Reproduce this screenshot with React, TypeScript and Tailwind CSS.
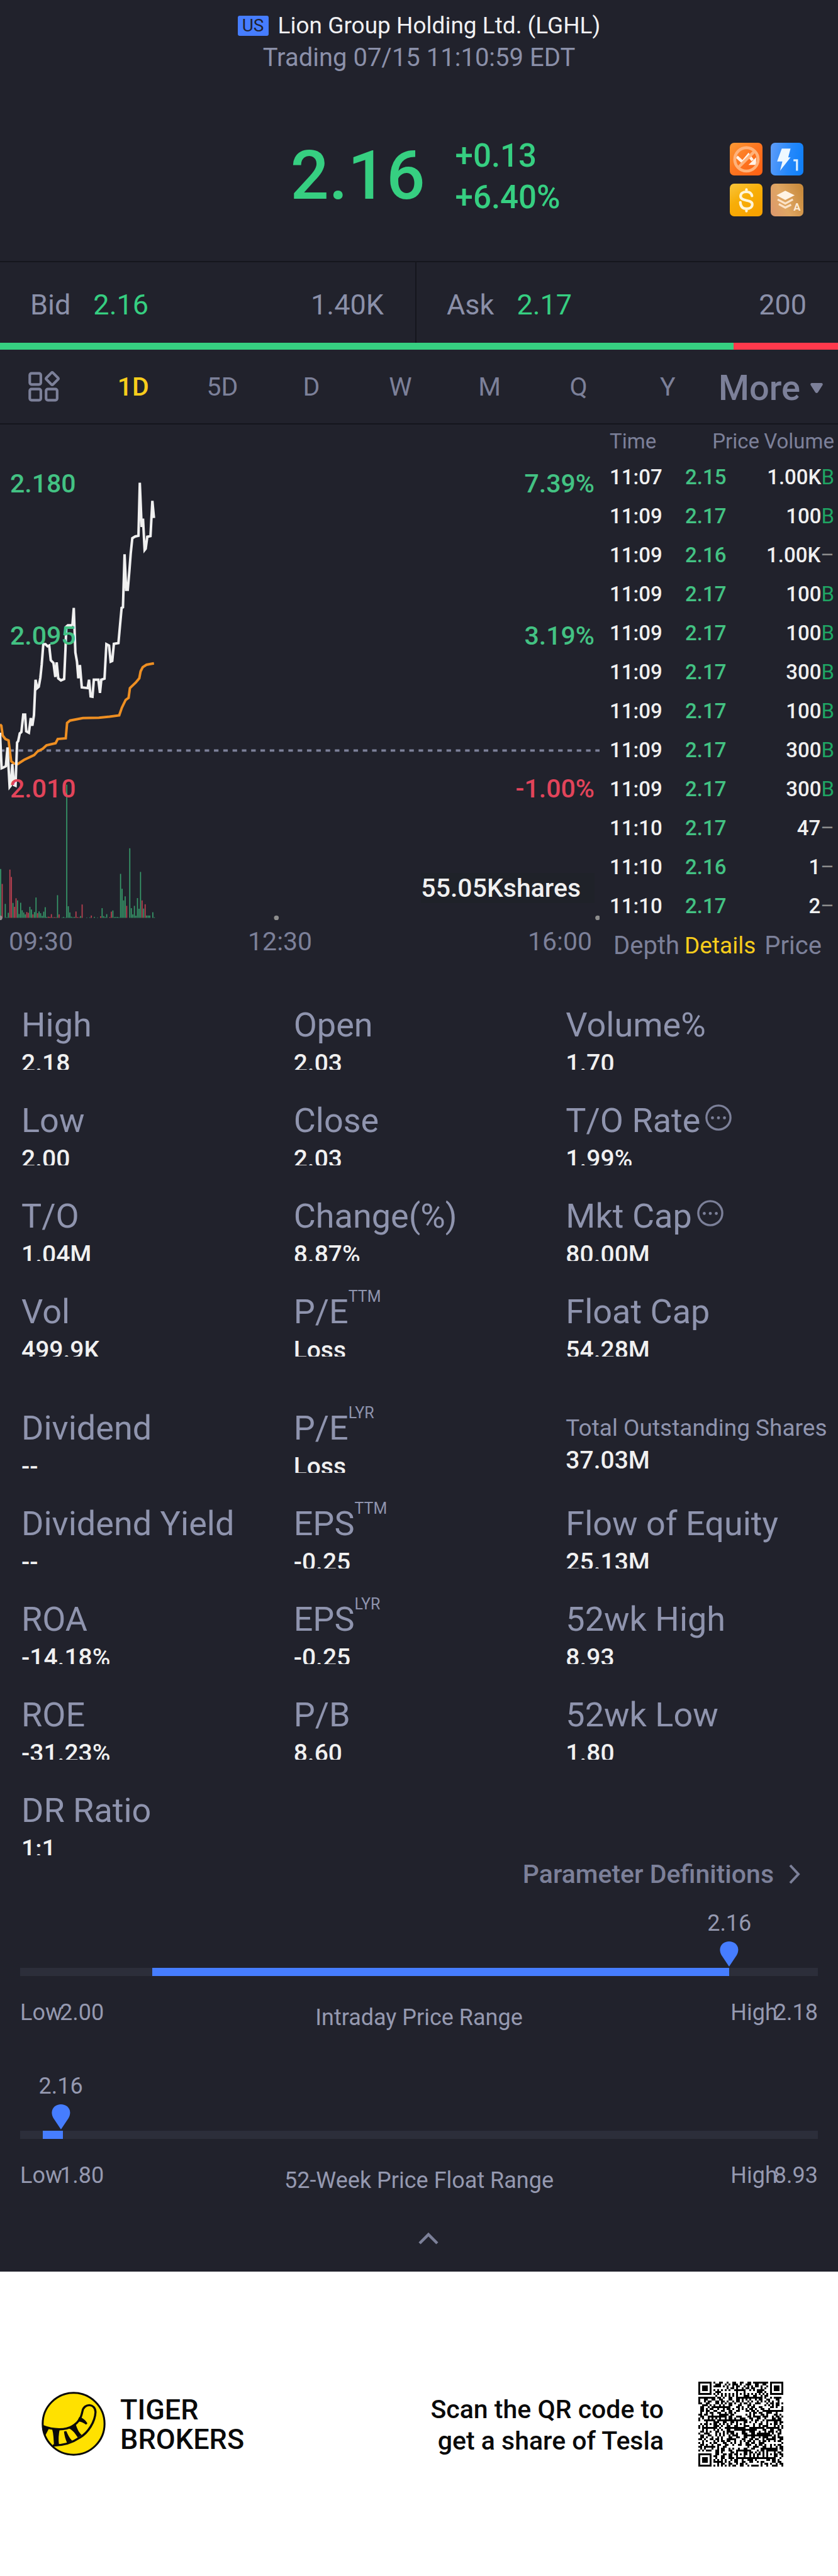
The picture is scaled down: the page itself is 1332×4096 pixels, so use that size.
import { ReactNode } from "react";

type Side = "B" | "–";

const intervals = ["1D", "5D", "D", "W", "M", "Q", "Y"];

const trades: { time: string; price: string; volume: string; side: Side }[] = [
  { time: "11:07", price: "2.15", volume: "1.00K", side: "B" },
  { time: "11:09", price: "2.17", volume: "100", side: "B" },
  { time: "11:09", price: "2.16", volume: "1.00K", side: "–" },
  { time: "11:09", price: "2.17", volume: "100", side: "B" },
  { time: "11:09", price: "2.17", volume: "100", side: "B" },
  { time: "11:09", price: "2.17", volume: "300", side: "B" },
  { time: "11:09", price: "2.17", volume: "100", side: "B" },
  { time: "11:09", price: "2.17", volume: "300", side: "B" },
  { time: "11:09", price: "2.17", volume: "300", side: "B" },
  { time: "11:10", price: "2.17", volume: "47", side: "–" },
  { time: "11:10", price: "2.16", volume: "1", side: "–" },
  { time: "11:10", price: "2.17", volume: "2", side: "–" },
];

type Stat = { label: string; value: string; sup?: string; info?: boolean; small?: boolean };

const quoteStats: Stat[] = [
  { label: "High", value: "2.18" },
  { label: "Open", value: "2.03" },
  { label: "Volume%", value: "1.70" },
  { label: "Low", value: "2.00" },
  { label: "Close", value: "2.03" },
  { label: "T/O Rate", value: "1.99%", info: true },
  { label: "T/O", value: "1.04M" },
  { label: "Change(%)", value: "8.87%" },
  { label: "Mkt Cap", value: "80.00M", info: true },
  { label: "Vol", value: "499.9K" },
  { label: "P/E", value: "Loss", sup: "TTM" },
  { label: "Float Cap", value: "54.28M" },
];

const companyStats: Stat[] = [
  { label: "Dividend", value: "--" },
  { label: "P/E", value: "Loss", sup: "LYR" },
  { label: "Total Outstanding Shares", value: "37.03M", small: true },
  { label: "Dividend Yield", value: "--" },
  { label: "EPS", value: "-0.25", sup: "TTM" },
  { label: "Flow of Equity", value: "25.13M" },
  { label: "ROA", value: "-14.18%" },
  { label: "EPS", value: "-0.25", sup: "LYR" },
  { label: "52wk High", value: "8.93" },
  { label: "ROE", value: "-31.23%" },
  { label: "P/B", value: "8.60" },
  { label: "52wk Low", value: "1.80" },
  { label: "DR Ratio", value: "1:1" },
];

const priceLine =
  "0,900 6,1002 12,1000 22,996 28,942 36,1056 40,1052 46,990 52,1050 58,1052 64,928 68,924 74,902 80,898 87,848 94,848 98,896 108,900 115,858 121,880 127,850 133,748 139,772 145,768 151,742 156,705 162,646 170,646 178,652 184,650 190,692 200,700 207,740 212,698 218,744 228,750 240,746 245,660 248,596 254,592 266,592 271,590 276,542 282,670 288,696 293,744 299,706 306,770 328,772 333,748 339,796 346,797 351,748 368,748 374,786 379,748 391,745 398,646 408,650 414,696 420,694 426,645 443,643 449,592 455,542 460,540 466,388 472,490 478,490 484,436 489,386 495,342 506,337 518,335 523,183 530,310 535,286 541,376 545,372 551,338 563,336 570,235 576,284";

const averageLine =
  "0,876 5,880 10,908 20,918 32,922 38,960 42,982 52,988 66,990 90,978 128,964 140,954 160,946 174,936 208,930 216,918 246,916 251,872 262,865 310,858 370,857 410,854 446,850 456,828 470,806 481,800 486,772 508,756 521,744 526,724 534,712 548,705 576,701";

// one entry per minute, a negative number is a falling minute
const volumes = [
  252, -175, 0, 72, 3, 26, -249, -211, 77, -57, -101, 90, 20, 78, 39, 28, 18, -30, -26, 57,
  43, -18, 30, 105, -24, 33, 24, 10, 32, 55, 5, -6, -5, -19, 3, -4, -3, 117, -18, 0,
  2, 5, 2, 687, 60, 28, 6, 3, 5, -33, -4, -3, 9, -69, 0, 0, 2, 0, 3, -12,
  0, 5, 0, 2, 0, -8, 50, 9, 4, 19, 0, -4, -32, 38, 4, 5, 5, 3, 227, 150,
  90, 111, -62, 0, 359, 50, 18, 62, 11, 102, 47, 237, -90, 48, -70, 12, 12, 12, 0, 29, 3,
];

function FeatureBadges() {
  return (
    <div className="grid grid-cols-2 gap-[13px]">
      <svg viewBox="0 0 56 56" className="size-[52px] rounded-[7px]">
        <defs>
          <linearGradient id="orange" x1="0" y1="0" x2="1" y2="1">
            <stop offset="0" stopColor="#fb9a35" />
            <stop offset="0.5" stopColor="#fd7420" />
            <stop offset="1" stopColor="#fd5f12" />
          </linearGradient>
        </defs>
        <rect width="56" height="56" fill="url(#orange)" />
        <path d="M12 24l10 9 10-12 7 9" fill="none" stroke="#fff3e8" strokeWidth="5" />
        <path d="M45 25v13H32z" fill="#fff3e8" />
        <g fill="none" stroke="#ffb27a" strokeWidth="5">
          <circle cx="28.500" cy="28.500" r="20" />
          <path d="M43 14L14 43" />
        </g>
      </svg>
      <svg viewBox="0 0 56 56" className="size-[52px] rounded-[7px]">
        <defs>
          <linearGradient id="blue" x1="0" y1="0.300" x2="1" y2="0.500">
            <stop offset="0" stopColor="#5b9bf8" />
            <stop offset="0.600" stopColor="#2488fb" />
            <stop offset="1" stopColor="#1180f8" />
          </linearGradient>
        </defs>
        <rect width="56" height="56" fill="url(#blue)" />
        <path d="M19 10h15l-4 15h4L16 48l4-16h-9z" fill="#eef8ff" />
        <path d="M39 30h6v18" fill="none" stroke="#d9edff" strokeWidth="3.500" />
      </svg>
      <svg viewBox="0 0 56 56" className="size-[52px] rounded-[7px]">
        <defs>
          <linearGradient id="gold" x1="0" y1="0" x2="0.600" y2="1">
            <stop offset="0" stopColor="#f9c53c" />
            <stop offset="0.500" stopColor="#f7ae08" />
            <stop offset="1" stopColor="#f7a200" />
          </linearGradient>
        </defs>
        <rect width="56" height="56" fill="url(#gold)" />
        <path
          d="M38 21c-1-5-5-7-9.500-7-6 0-10 3-10 7.500 0 10 20 4.500 20 14 0 4.500-4 7.500-10 7.500s-10-3-10.500-11M28.500 10v4M28.500 43v4"
          fill="none"
          stroke="#fff5d8"
          strokeWidth="4.500"
          strokeLinecap="round"
        />
      </svg>
      <svg viewBox="0 0 56 56" className="size-[52px] rounded-[7px]">
        <defs>
          <linearGradient id="bronze" x1="0" y1="0.700" x2="1" y2="0.300">
            <stop offset="0" stopColor="#dd9a6b" />
            <stop offset="0.400" stopColor="#e0a763" />
            <stop offset="1" stopColor="#c98b3d" />
          </linearGradient>
        </defs>
        <rect width="56" height="56" fill="url(#bronze)" />
        <path d="M25 12l16 8-16 8-15-8z" fill="#fff3e4" />
        <g fill="none" stroke="#fbe3c8" strokeWidth="3.500">
          <path d="M12 27l13 7 13-7" />
          <path d="M14 35l11 6 10-5" />
        </g>
        <text x="39" y="46" fontSize="18" fontWeight="700" fill="#fdebd5" className="font-['Roboto',sans-serif]">
          A
        </text>
      </svg>
    </div>
  );
}

function Header() {
  return (
    <header className="pt-[19px]">
      <h1 className="flex items-center justify-center gap-[15px] text-[37px] leading-[44px] text-[#f0f0f2]">
        <span className="flex h-8 w-[49px] items-center justify-center rounded-[3px] bg-[#467dff] text-[28px] text-[#21222c]">
          US
        </span>
        Lion Group Holding Ltd. (LGHL)
      </h1>
      <p className="mt-[5px] text-center text-[40px] leading-[48px] text-[#8b90a9]">
        Trading 07/15 11:10:59 EDT
      </p>
      <div className="mt-[99px] mb-[68px] grid grid-cols-[1fr_auto_1fr] items-center pl-5 font-medium text-[#36cf81]">
        <span />
        <div className="flex items-center gap-12">
          <span className="pb-1 text-[108px] leading-[108px]">2.16</span>
          <div className="text-[51px] leading-[66px]">
            <p>+0.13</p>
            <p>+6.40%</p>
          </div>
        </div>
        <div className="flex justify-end pt-2 pr-[55px]">
          <FeatureBadges />
        </div>
      </div>
    </header>
  );
}

function QuoteSide({ name, price, size }: { name: string; price: string; size: string }) {
  return (
    <div className="flex h-32 items-center gap-9 pr-[50px] pl-[48px] pt-2">
      <span>{name}</span>
      <span className="text-[#36cf81]">{price}</span>
      <span className="ml-auto">{size}</span>
    </div>
  );
}

function IntervalBar() {
  return (
    <nav className="flex h-[117px] items-center text-[#7c8099]">
      <button aria-label="Chart layout" className="w-[141px] pl-[45px]">
        <svg viewBox="0 0 54 54" className="size-[50px]" fill="none" stroke="currentColor" strokeWidth="4.500">
          <rect x="2.500" y="4" width="19" height="19" rx="3" />
          <rect x="2.500" y="31" width="19" height="19" rx="3" />
          <rect x="30.500" y="31" width="19" height="19" rx="3" />
          <rect x="33" y="5" width="16" height="16" rx="2" transform="rotate(45 41 13)" />
        </svg>
      </button>
      <div className="grid flex-1 grid-cols-7 text-[41px] leading-[48px]">
        {intervals.map((item) => (
          <button key={item} className={item === "1D" ? "font-medium text-[#f7cd1c]" : ""}>
            {item}
          </button>
        ))}
      </div>
      <button className="flex w-[200px] items-center gap-4 pt-1 pl-[10px] text-[56px] leading-[64px] font-medium">
        More
        <svg viewBox="0 0 20 16" className="h-4 w-5" fill="currentColor">
          <path d="M2 0h16q3 1 1 4l-7 11q-2 2-4 0L1 4q-2-3 1-4z" />
        </svg>
      </button>
    </nav>
  );
}

function PriceChart() {
  return (
    <div className="relative text-[41px] leading-[48px] font-medium text-[#43c283]">
      <svg viewBox="0 16 2243 1425" preserveAspectRatio="none" className="block h-[790px] w-full">
        <line x1="0" y1="951" x2="2243" y2="951" stroke="#7c8099" strokeWidth="7" strokeDasharray="17 17.800" />
        {volumes.map((v, i) => (
          <rect
            key={i}
            x={0.5 + i * 5.75}
            y={1431 - Math.abs(v) * 0.556}
            width="4"
            height={Math.abs(v) * 0.556}
            fill={v < 0 ? "#bd4151" : "#379a6a"}
          />
        ))}
        <polyline points={averageLine} fill="none" stroke="#ee8f22" strokeWidth="4" vectorEffect="non-scaling-stroke" />
        <polyline points={priceLine} fill="none" stroke="#f0f0f0" strokeWidth="4" vectorEffect="non-scaling-stroke" />
        {[0, 1034, 2236].map((x) => (
          <ellipse key={x} cx={x} cy="1431" rx="9" ry="6.500" fill="#8d8d8d" />
        ))}
      </svg>
      <span className="absolute top-[70px] left-4">2.180</span>
      <span className="absolute top-[312px] left-4">2.095</span>
      <span className="absolute top-[555px] left-4 text-[#e2445a]">2.010</span>
      <span className="absolute top-[70px] right-2">7.39%</span>
      <span className="absolute top-[312px] right-2">3.19%</span>
      <span className="absolute top-[555px] right-2 text-[#e2445a]">-1.00%</span>
      <span className="absolute top-[713px] right-2 bg-[#1f2229] pr-[22px] text-[#f0f0f0]">55.05Kshares</span>
      <div className="grid h-16 grid-cols-[41%_1fr_auto] items-center pr-3 pl-3.5 font-normal text-[#7c8099]">
        <span>09:30</span>
        <span>12:30</span>
        <span>16:00</span>
      </div>
    </div>
  );
}

function TradeList() {
  return (
    <aside className="w-[379px] pr-[6px] pl-4 text-[#7c8099]">
      <table className="w-full table-fixed text-[33px] leading-[40px]">
        <thead>
          <tr className="h-[53px]">
            <th className="w-[120px] text-left font-normal">Time</th>
            <th className="w-[118px] text-right font-normal">Price</th>
            <th className="text-right font-normal">Volume</th>
          </tr>
        </thead>
        <tbody>
          {trades.map((trade, i) => (
            <tr key={i} className="h-[62px] font-medium text-[#f0f0f0]">
              <td>{trade.time}</td>
              <td className="text-[#43c283]">{trade.price}</td>
              <td className="text-right whitespace-nowrap">
                {trade.volume}
                <span className={trade.side === "B" ? "font-normal text-[#1fa563]" : "font-normal text-[#8d8d8d]"}>
                  {trade.side}
                </span>
              </td>
            </tr>
          ))}
        </tbody>
      </table>
      <div className="flex h-16 items-center gap-2 pl-1.5 text-[40px] leading-[48px]">
        <button>Depth</button>
        <button className="text-[37px] text-[#f7cd1c]">Details</button>
        <button className="ml-1.5">Price</button>
      </div>
    </aside>
  );
}

function StatCell({ stat }: { stat: Stat }) {
  return (
    <div className="whitespace-nowrap">
      <dt className={`flex h-16 items-start leading-[64px] text-[#8f94ae] ${stat.small ? "text-[37px]" : "text-[54px]"}`}>
        {stat.label}
        {stat.sup && <span className="text-[25px] leading-4">{stat.sup}</span>}
        {stat.info && (
          <svg viewBox="0 0 44 44" className="mt-1.5 ml-2 size-[42px]" fill="none" stroke="#7c8099" strokeWidth="3.500">
            <circle cx="22" cy="22" r="20" />
            <g fill="#7c8099" stroke="none">
              <circle cx="12" cy="22.500" r="2.500" />
              <circle cx="22" cy="22.500" r="2.500" />
              <circle cx="32" cy="22.500" r="2.500" />
            </g>
          </svg>
        )}
      </dt>
      <dd
        className={`h-[39px] overflow-hidden text-[39px] font-medium text-[#f0f0f0] ${
          stat.small ? "leading-[39px]" : "leading-[58px]"
        }`}
      >
        {stat.value}
      </dd>
    </div>
  );
}

function StatGrid({ stats }: { stats: Stat[] }) {
  return (
    <dl className="grid grid-cols-3 gap-y-[49px] pl-[34px]">
      {stats.map((stat, i) => (
        <StatCell key={i} stat={stat} />
      ))}
    </dl>
  );
}

type RangeProps = {
  title: string;
  low: string;
  high: string;
  from: number;
  to: number;
  pin: number;
};

function PriceRange({ title, low, high, from, to, pin }: RangeProps) {
  return (
    <div className="px-8 text-[36px] leading-[44px] text-[#9599b0]">
      <div className="relative h-[93px]">
        <div className="absolute flex -translate-x-1/2 flex-col items-center gap-[7px]" style={{ left: `${pin}%` }}>
          <span>2.16</span>
          <svg viewBox="0 0 30 40" className="h-10 w-[30px]" fill="#467dff">
            <path d="M15 40L3 22C-4 9 5 0 15 0s19 9 12 22z" />
          </svg>
        </div>
      </div>
      <div className="h-[13px] bg-[#2c2e3a]">
        <div className="h-full bg-[#467dff]" style={{ marginLeft: `${from}%`, width: `${to - from}%` }} />
      </div>
      <div className="mt-9 grid grid-cols-[1fr_auto_1fr] items-start">
        <p>
          Low<span className="-ml-1">{low}</span>
        </p>
        <p className="pt-2">{title}</p>
        <p className="text-right">
          High<span className="-ml-1.5">{high}</span>
        </p>
      </div>
    </div>
  );
}

function TigerLogo() {
  return (
    <svg viewBox="33 33 334 334" className="size-[102px]">
      <circle cx="200" cy="200" r="161" fill="#ffe100" stroke="#0a0a0a" strokeWidth="10" />
      <path
        d="M40 212C95 234 160 234 194 212C236 186 240 160 246 134C254 92 312 92 314 138C312 190 276 246 232 272C194 298 150 314 92 313"
        fill="none"
        stroke="#0a0a0a"
        strokeWidth="11"
      />
      <g fill="#0a0a0a">
        <path d="M40 208L72 224L52 262L38 230z" />
        <path d="M88 226H128C122 254 120 282 124 310L98 314C96 284 96 254 88 226z" />
        <path d="M150 240L162 238C170 258 178 274 192 288L166 300C158 280 152 262 150 240z" />
        <path d="M172 222L210 196C216 222 226 244 242 258L222 272C208 250 196 232 172 222z" />
        <path d="M230 164C246 168 262 182 271 196Q272 204 262 203C250 194 238 188 218 188z" />
      </g>
    </svg>
  );
}

const QR_SIZE = 45;

function buildQr() {
  const grid: boolean[][] = [];
  let seed = 20210715;
  for (let y = 0; y < QR_SIZE; y++) {
    grid.push([]);
    for (let x = 0; x < QR_SIZE; x++) {
      seed = (seed * 1103515245 + 12345) % 2147483648;
      grid[y].push(((seed >> 12) & 1) === 1);
    }
  }
  for (let i = 8; i < QR_SIZE - 8; i++) {
    grid[6][i] = i % 2 === 0;
    grid[i][6] = i % 2 === 0;
  }
  // rings around a centre: finder patterns reach 4 modules, alignment ones 2
  const stamp = (cx: number, cy: number, reach: number, light: number[]) => {
    for (let y = cy - reach; y <= cy + reach; y++) {
      for (let x = cx - reach; x <= cx + reach; x++) {
        if (grid[y]?.[x] === undefined) continue;
        grid[y][x] = !light.includes(Math.max(Math.abs(x - cx), Math.abs(y - cy)));
      }
    }
  };
  [[6, 22], [22, 6], [22, 22], [22, 38], [38, 22], [38, 38]].forEach(([x, y]) => stamp(x, y, 2, [1]));
  [[3, 3], [41, 3], [3, 41]].forEach(([x, y]) => stamp(x, y, 4, [2, 4]));
  return grid;
}

const qrPath = buildQr()
  .flatMap((row, y) => row.map((dark, x) => (dark ? `M${x} ${y}h1v1h-1z` : "")))
  .join("");

function Footer() {
  return (
    <footer className="flex h-[484px] items-center bg-white pr-[87px] pl-[66px] font-medium text-[#0a0a0a]">
      <TigerLogo />
      <p className="ml-[23px] pt-0.5 text-[45px] leading-[47px]">
        TIGER
        <br />
        BROKERS
      </p>
      <p className="ml-auto pt-1 text-right text-[41px] leading-[50px]">
        Scan the QR code to
        <br />
        get a share of Tesla
      </p>
      <svg viewBox={`0 0 ${QR_SIZE} ${QR_SIZE}`} className="ml-[55px] size-[135px]" shapeRendering="crispEdges">
        <path d={qrPath} fill="#000" />
      </svg>
    </footer>
  );
}

function Divider({ children }: { children: ReactNode }) {
  return <section className="border-t-2 border-[#15161d]">{children}</section>;
}

export default function App() {
  return (
    <main className="bg-[#21222c] font-['Roboto','Liberation_Sans',sans-serif]">
      <Header />
      <Divider>
        <div className="grid grid-cols-[662fr_670fr] divide-x-2 divide-[#15161d] text-[45px] leading-[52px] text-[#8b90a9]">
          <QuoteSide name="Bid" price="2.16" size="1.40K" />
          <QuoteSide name="Ask" price="2.17" size="200" />
        </div>
        <div className="flex h-[11px] bg-[#ff394c]">
          <div className="w-[87.5%] bg-[#36cf81]" />
        </div>
        <IntervalBar />
      </Divider>
      <Divider>
        <div className="flex">
          <div className="min-w-0 flex-1">
            <PriceChart />
          </div>
          <TradeList />
        </div>
      </Divider>

      <div className="mt-[62px]">
        <StatGrid stats={quoteStats} />
      </div>
      <div className="mt-[82px]">
        <StatGrid stats={companyStats} />
      </div>

      <div className="mt-1.5 flex justify-end pr-[60px]">
        <a href="#definitions" className="flex items-center gap-6 text-[41px] leading-[48px] font-medium text-[#7c8099]">
          Parameter Definitions
          <svg viewBox="0 0 18 32" className="h-8 w-[18px]" fill="none" stroke="currentColor" strokeWidth="4">
            <path d="M2 2l13 14L2 30" />
          </svg>
        </a>
      </div>

      <div className="mt-8">
        <PriceRange title="Intraday Price Range" low="2.00" high="2.18" from={16.6} to={88.9} pin={88.9} />
      </div>
      <div className="mt-[65px]">
        <PriceRange title="52-Week Price Float Range" low="1.80" high="8.93" from={2.8} to={5.4} pin={5.1} />
      </div>

      <div className="flex h-[123px] items-center justify-center pt-4 pl-[30px]">
        <button aria-label="Collapse">
          <svg viewBox="0 0 32 20" className="block h-5 w-8" fill="none" stroke="#7c8099" strokeWidth="4.500">
            <path d="M2 18L16 4l14 14" />
          </svg>
        </button>
      </div>
      <Footer />
    </main>
  );
}
